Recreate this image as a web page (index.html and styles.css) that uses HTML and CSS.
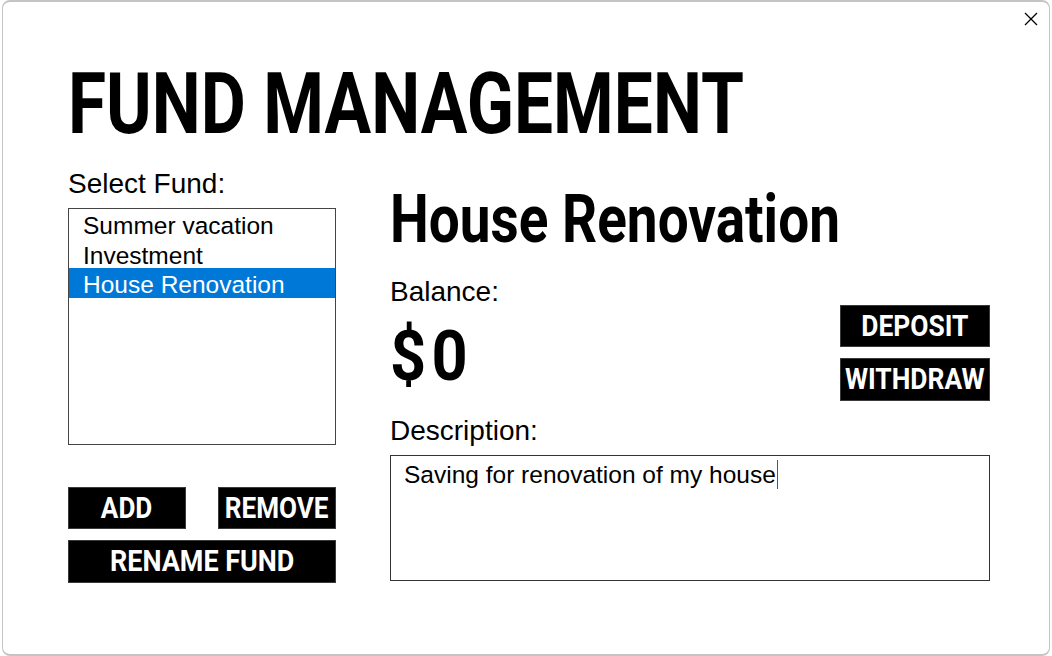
FILE: index.html
```html
<!DOCTYPE html>
<html lang="en">
<head>
<meta charset="utf-8">
<title>Fund Management</title>
<link rel="stylesheet" href="styles.css">
</head>
<body>
<div class="window">
  <button class="close" aria-label="Close">
    <svg width="14" height="14" viewBox="0 0 14 14"><path d="M1 1 L13 13 M13 1 L1 13" stroke="#000" stroke-width="1.3" fill="none"/></svg>
  </button>
  <h1 class="title"><span class="cond">FUND MANAGEMENT</span></h1>
  <div class="columns">
    <div class="left">
      <div class="label">Select Fund:</div>
      <ul class="fund-list">
        <li class="fund">Summer vacation</li>
        <li class="fund">Investment</li>
        <li class="fund selected">House Renovation</li>
      </ul>
      <div class="list-actions">
        <div class="action-row">
          <button class="btn btn-half"><span class="btn-text">ADD</span></button>
          <button class="btn btn-half"><span class="btn-text">REMOVE</span></button>
        </div>
        <button class="btn btn-wide"><span class="btn-text">RENAME FUND</span></button>
      </div>
    </div>
    <div class="right">
      <h2 class="fund-name"><span class="cond">House Renovation</span></h2>
      <div class="balance-row">
        <div class="balance-info">
          <div class="label">Balance:</div>
          <div class="amount"><span class="cond">$0</span></div>
        </div>
        <div class="balance-actions">
          <button class="btn btn-side"><span class="btn-text">DEPOSIT</span></button>
          <button class="btn btn-side"><span class="btn-text">WITHDRAW</span></button>
        </div>
      </div>
      <div class="label desc-label">Description:</div>
      <div class="desc-box">Saving for renovation of my house<span class="caret"></span></div>
    </div>
  </div>
</div>
</body>
</html>
```
FILE: styles.css
```css
html, body {
  margin: 0;
  padding: 0;
  background: #ffffff;
}

body {
  width: 1052px;
  height: 656px;
  overflow: hidden;
  font-family: "Liberation Sans", Arial, sans-serif;
  color: #000;
}

.window {
  position: relative;
  box-sizing: border-box;
  margin-left: 2px;
  width: 1048px;
  height: 656px;
  border: 1px solid #c4c4c4;
  border-top-width: 2px;
  border-bottom-width: 2px;
  border-radius: 8px;
  padding: 59px 0 0 65px;
  background: #fff;
}

.close {
  position: absolute;
  top: 10px;
  right: 11px;
  width: 14px;
  height: 14px;
  padding: 0;
  border: 0;
  background: transparent;
  display: flex;
}

.cond {
  display: inline-block;
  transform-origin: left center;
  white-space: nowrap;
}

.title {
  margin: 0;
  font-family: Roboto, sans-serif;
  font-weight: 700;
  font-size: 86px;
  line-height: 85px;
}

.title .cond {
  transform: scaleX(0.807);
}

.columns {
  display: flex;
  margin-top: 14px;
}

.left {
  width: 268px;
  display: flex;
  flex-direction: column;
}

.label {
  font-size: 28px;
  line-height: 34px;
}

.left .label {
  margin-top: 7px;
}

.fund-list {
  list-style: none;
  margin: 7px 0 0 0;
  padding: 0;
  height: 237px;
  box-sizing: border-box;
  border: 1px solid #444;
}

.fund {
  height: 29.5px;
  line-height: 34px;
  font-size: 24.5px;
  padding-left: 14px;
}

.fund.selected {
  background: #0078d7;
  color: #fff;
}

.list-actions {
  margin-top: 42px;
  display: flex;
  flex-direction: column;
  gap: 11px;
}

.action-row {
  display: flex;
  justify-content: space-between;
}

.btn {
  box-sizing: border-box;
  display: flex;
  align-items: center;
  justify-content: center;
  padding: 0;
  margin: 0;
  background: #000;
  color: #fff;
  border: 1px solid #3a3a3a;
  font-family: Roboto, sans-serif;
  font-weight: 700;
  font-size: 29px;
  line-height: 29px;
  overflow: visible;
}

.btn-text {
  display: inline-block;
  white-space: nowrap;
  transform: scaleX(0.9);
}

.btn-half {
  width: 118px;
  height: 42px;
}

.btn-wide {
  width: 268px;
  height: 43px;
}

.btn-wide .btn-text {
  transform: scaleX(0.93);
}

.right {
  margin-left: 54px;
  width: 600px;
  padding-top: 25px;
  display: flex;
  flex-direction: column;
}

.fund-name {
  margin: 0;
  font-family: Roboto, sans-serif;
  font-weight: 700;
  font-size: 66px;
  line-height: 70px;
}

.fund-name .cond {
  transform: scaleX(0.832);
}

.balance-row {
  display: flex;
  justify-content: space-between;
  margin-top: 20px;
}

.amount {
  margin-top: 12px;
  font-family: Roboto, sans-serif;
  font-weight: 700;
  font-size: 70px;
  line-height: 70px;
  letter-spacing: 6px;
}

.amount .cond {
  transform: scaleX(0.9);
}

.balance-actions {
  margin-top: 30px;
  display: flex;
  flex-direction: column;
  gap: 11px;
}

.btn-side {
  width: 150px;
  height: 42px;
}

.btn-side + .btn-side {
  height: 43px;
}

.btn-side .btn-text {
  transform: scaleX(0.91);
}

.desc-label {
  margin-top: 13px;
}

.desc-box {
  margin-top: 7px;
  box-sizing: border-box;
  height: 126px;
  border: 1px solid #333;
  padding: 4px 0 0 13px;
  font-size: 24.5px;
  line-height: 30px;
}

.caret {
  display: inline-block;
  width: 1px;
  height: 29px;
  margin-left: 1px;
  vertical-align: -6px;
  background: #555;
}
```
